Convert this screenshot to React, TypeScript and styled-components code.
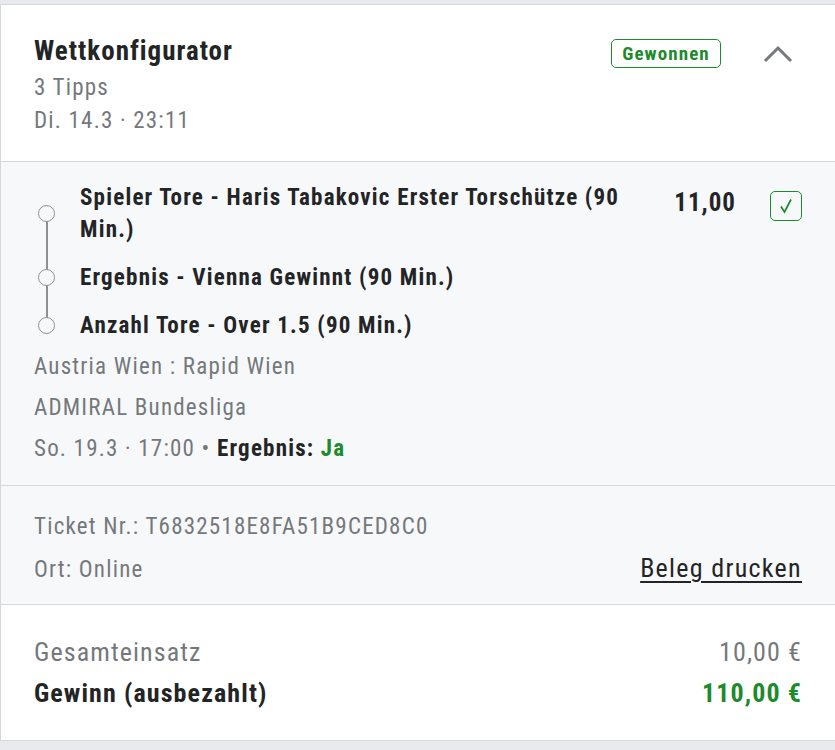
import React from "react";
import styled, { createGlobalStyle } from "styled-components";

const GlobalStyle = createGlobalStyle`
  html, body {
    margin: 0;
    padding: 0;
    background: #e8eaed;
  }
  body {
    font-family: Roboto, "Liberation Sans", sans-serif;
    font-stretch: condensed;
    letter-spacing: 1.2px;
    color: #222426;
  }
`;

const green = "#1d8a2c";
const gray = "#74787c";
const line = "#d5d7da";

const Page = styled.div`
  padding: 4px 0 10px 0;
  width: 835px;
`;

const Card = styled.div`
  background: #fff;
  border-left: 1px solid ${line};
  border-top: 1px solid ${line};
  border-bottom: 1px solid ${line};
`;

const Section = styled.div<{ $tint?: boolean }>`
  background: ${(p) => (p.$tint ? "#f7f8fa" : "#fff")};
  border-top: 1px solid ${line};
  &:first-child {
    border-top: none;
  }
`;

const Header = styled(Section)`
  display: flex;
  align-items: flex-start;
  padding: 29px 42px 24px 33px;
`;

const HeaderText = styled.div`
  flex: 1;
  display: flex;
  flex-direction: column;
`;

const Title = styled.div`
  font-size: 27px;
  font-weight: 700;
  line-height: 34px;
  letter-spacing: 1px;
  margin-bottom: 3px;
`;

const Muted = styled.div`
  font-size: 23px;
  line-height: 33px;
  color: ${gray};
`;

const Badge = styled.div`
  margin-top: 5px;
  width: 110px;
  height: 29px;
  box-sizing: border-box;
  border: 1.5px solid ${green};
  border-radius: 5px;
  color: ${green};
  font-weight: 700;
  font-size: 19px;
  display: flex;
  align-items: center;
  justify-content: center;
  letter-spacing: 1.1px;
`;

const Chevron = styled.svg`
  margin: 11px 0 0 42px;
`;

const Selections = styled(Section)`
  padding: 20px 33px 20px 33px;
`;

const TipRow = styled.div`
  display: flex;
  align-items: flex-start;
`;

const Timeline = styled.div`
  flex: 1;
  display: flex;
  flex-direction: column;
  gap: 16px;
  padding-right: 30px;
`;

const Tip = styled.div<{ $first?: boolean; $last?: boolean }>`
  position: relative;
  padding-left: 46px;
  font-size: 23px;
  font-weight: 700;
  line-height: 32px;

  &::before {
    content: "";
    position: absolute;
    left: 4px;
    top: 50%;
    width: 17px;
    height: 17px;
    margin-top: -9px;
    border: 1.5px solid #8c8f93;
    border-radius: 50%;
    background: #f7f8fa;
    box-sizing: border-box;
    z-index: 1;
  }
  &::after {
    content: "";
    position: absolute;
    left: 12px;
    width: 1.5px;
    background: #8c8f93;
    top: ${(p) => (p.$first ? "50%" : "-8px")};
    bottom: ${(p) => (p.$last ? "50%" : "-8px")};
  }
`;

const Odds = styled.div`
  font-size: 25px;
  font-weight: 700;
  line-height: 32px;
  letter-spacing: 1px;
  margin-top: 5px;
`;

const Check = styled.div`
  width: 32px;
  height: 30px;
  margin: 9px 0 0 34px;
  border: 1.5px solid ${green};
  border-radius: 5px;
  color: ${green};
  display: flex;
  align-items: center;
  justify-content: center;
  box-sizing: border-box;
`;

const Info = styled.div`
  margin-top: 8px;
  display: flex;
  flex-direction: column;
  gap: 8px;
`;

const Strong = styled.span<{ $green?: boolean }>`
  font-weight: 700;
  color: ${(p) => (p.$green ? green : "#222426")};
`;

const Ticket = styled(Section)`
  padding: 24px 33px 18px 33px;
  display: flex;
  flex-direction: column;
  gap: 10px;
`;

const Row = styled.div`
  display: flex;
  justify-content: space-between;
  align-items: baseline;
`;

const PrintLink = styled.a`
  font-size: 26px;
  letter-spacing: 1.3px;
  color: #222426;
  text-decoration: underline;
  text-decoration-thickness: 1.5px;
  text-underline-offset: 4px;
`;

const Totals = styled(Section)`
  padding: 29px 33px 29px 33px;
  display: flex;
  flex-direction: column;
  gap: 5px;
`;

const Amount = styled.div<{ $bold?: boolean; $green?: boolean }>`
  font-size: 26px;
  line-height: 36px;
  letter-spacing: 1.1px;
  font-weight: ${(p) => (p.$bold ? 700 : 400)};
  color: ${(p) => (p.$green ? green : p.$bold ? "#222426" : gray)};
`;

const tips = [
  "Spieler Tore - Haris Tabakovic Erster Torschütze (90 Min.)",
  "Ergebnis - Vienna Gewinnt (90 Min.)",
  "Anzahl Tore - Over 1.5 (90 Min.)",
];

export default function App() {
  return (
    <Page>
      <GlobalStyle />
      <Card>
        <Header>
          <HeaderText>
            <Title>Wettkonfigurator</Title>
            <Muted>3 Tipps</Muted>
            <Muted>Di. 14.3 · 23:11</Muted>
          </HeaderText>
          <Badge>Gewonnen</Badge>
          <Chevron width="30" height="18" viewBox="0 0 30 18">
            <path d="M2 16 L15 3 L28 16" fill="none" stroke="#77797c" strokeWidth="3" />
          </Chevron>
        </Header>
        <Selections $tint>
          <TipRow>
            <Timeline>
              {tips.map((t, i) => (
                <Tip key={i} $first={i === 0} $last={i === tips.length - 1}>
                  {t}
                </Tip>
              ))}
            </Timeline>
            <Odds>11,00</Odds>
            <Check>
              <svg width="16" height="18" viewBox="0 0 16 18">
                <path d="M3 9.5 L6.5 15 L13 2.5" fill="none" stroke={green} strokeWidth="1.7" />
              </svg>
            </Check>
          </TipRow>
          <Info>
            <Muted>Austria Wien : Rapid Wien</Muted>
            <Muted>ADMIRAL Bundesliga</Muted>
            <Muted>
              So. 19.3 · 17:00 • <Strong>Ergebnis:</Strong> <Strong $green>Ja</Strong>
            </Muted>
          </Info>
        </Selections>
        <Ticket $tint>
          <Muted>Ticket Nr.: T6832518E8FA51B9CED8C0</Muted>
          <Row>
            <Muted>Ort: Online</Muted>
            <PrintLink>Beleg drucken</PrintLink>
          </Row>
        </Ticket>
        <Totals>
          <Row>
            <Amount>Gesamteinsatz</Amount>
            <Amount>10,00 €</Amount>
          </Row>
          <Row>
            <Amount $bold>Gewinn (ausbezahlt)</Amount>
            <Amount $bold $green>110,00 €</Amount>
          </Row>
        </Totals>
      </Card>
    </Page>
  );
}
